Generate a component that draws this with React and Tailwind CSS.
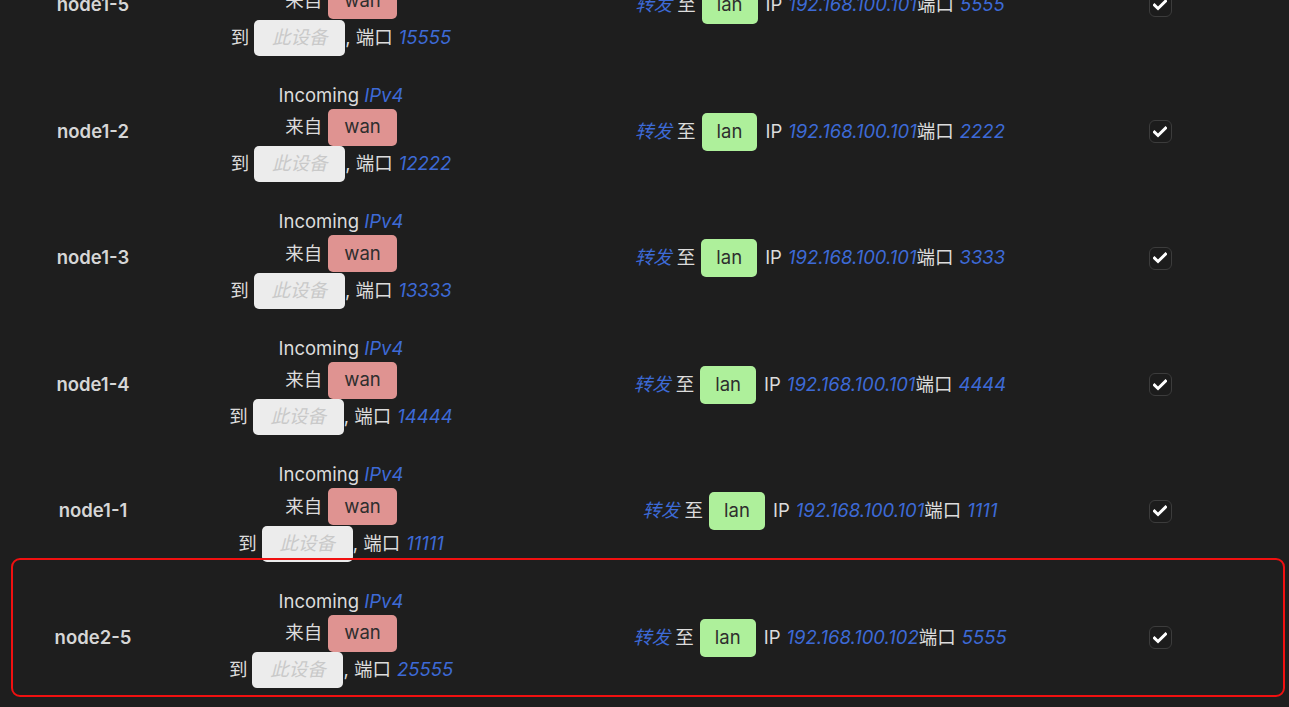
import React from 'react';

const rules = [
  { name: 'node1-5', src: '15555', ip: '192.168.100.101', port: '5555' },
  { name: 'node1-2', src: '12222', ip: '192.168.100.101', port: '2222' },
  { name: 'node1-3', src: '13333', ip: '192.168.100.101', port: '3333' },
  { name: 'node1-4', src: '14444', ip: '192.168.100.101', port: '4444' },
  { name: 'node1-1', src: '11111', ip: '192.168.100.101', port: '1111' },
  { name: 'node2-5', src: '25555', ip: '192.168.100.102', port: '5555' },
];

const CheckBox = () => (
  <div className="w-[23px] h-[23px] rounded-[6px] border border-[#3c3c3c] bg-[#1c1c1c] flex items-center justify-center">
    <svg width="14" height="12" viewBox="0 0 14 12">
      <path d="M1.5 6.2 L5 9.5 L12.5 2.2" fill="none" stroke="#fff" strokeWidth="3" strokeLinecap="square" />
    </svg>
  </div>
);

const Row = ({ rule }) => (
  <div className="grid grid-cols-[186px_310px_648px_32px_1fr] h-[126.5px] items-center">
    {/* name */}
    <div className="text-center font-semibold text-[18.5px] text-[#d6d6d6]">{rule.name}</div>

    {/* source */}
    <div className="flex flex-col items-center text-[18.5px] text-[#dcdcdc]">
      <div className="h-[28px] leading-[28px]">
        Incoming <span className="italic text-[#3d6ad6]">IPv4</span>
      </div>
      <div className="flex items-center h-[37px]">
        <span className="mr-[6px]">来自</span>
        <span className="h-[37px] px-[16px] rounded-[5px] bg-[#df9391] text-[#2e2e2e] flex items-center">wan</span>
      </div>
      <div className="flex items-center h-[37px]">
        <span className="mr-[5px]">到</span>
        <span className="h-[36px] w-[91px] rounded-[5px] bg-[#ececec] text-[#c9c9c9] italic flex items-center justify-center">此设备</span>
        <span>, 端口</span>
        <span className="italic text-[#3d6ad6] ml-[6px]">{rule.src}</span>
      </div>
    </div>

    {/* forward */}
    <div className="flex items-center justify-center text-[18.5px] text-[#dcdcdc]">
      <span className="italic text-[#3d6ad6]">转发</span>
      <span className="ml-[5px]">至</span>
      <span className="ml-[6px] h-[38px] px-[15px] rounded-[5px] bg-[#aef09b] text-[#2e2e2e] flex items-center">lan</span>
      <span className="ml-[8px]">IP</span>
      <span className="ml-[6px] italic text-[#3d6ad6]">{rule.ip}</span>
      <span>端口</span>
      <span className="ml-[6px] italic text-[#3d6ad6]">{rule.port}</span>
    </div>

    {/* enabled */}
    <div className="flex justify-center">
      <CheckBox />
    </div>
    <div />
  </div>
);

export default function App() {
  return (
    <div className="relative w-full h-[707px] overflow-hidden bg-[#1e1e1e]" style={{ fontFamily: 'Inter, "Noto Sans CJK SC", sans-serif' }}>
      <div className="mt-[-58px]">
        {rules.map((r) => (
          <Row key={r.name} rule={r} />
        ))}
      </div>
      {/* highlight */}
      <div className="absolute left-[11px] top-[558px] w-[1274px] h-[139px] rounded-[9px] border-2 border-[#f01010] pointer-events-none" />
    </div>
  );
}
